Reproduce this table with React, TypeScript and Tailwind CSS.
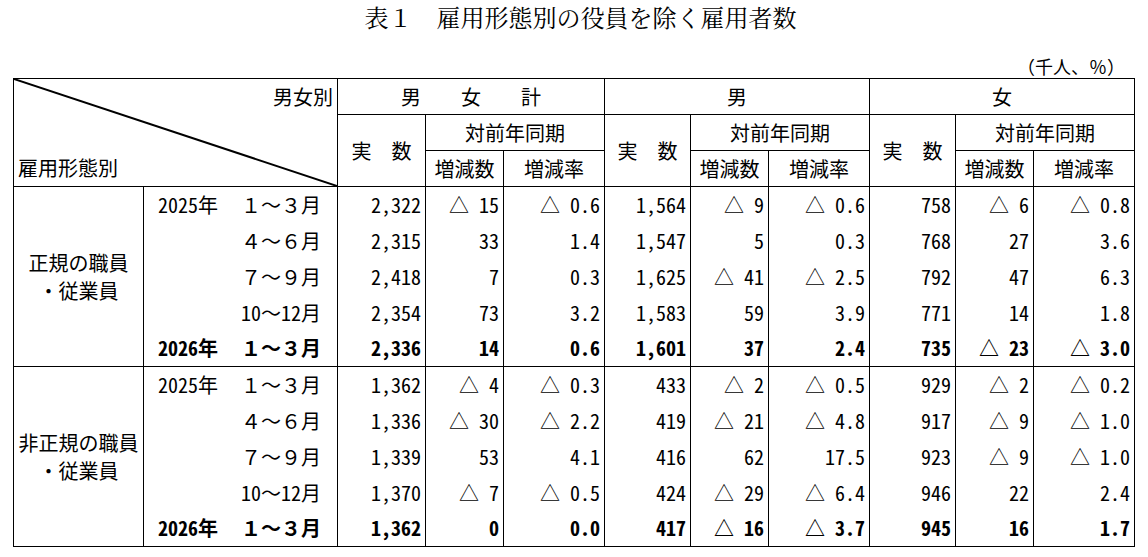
import React from 'react';

type Row = {
  year?: string;
  month: string;
  bold?: boolean;
  values: string[];
};

type Group = {
  label: string[];
  rows: Row[];
};

const GROUPS: Group[] = [
  {
    label: ['正規の職員', '・従業員'],
    rows: [
      { year: '2025年', month: '１～３月', values: ['2,322', '△ 15', '△ 0.6', '1,564', '△ 9', '△ 0.6', '758', '△ 6', '△ 0.8'] },
      { month: '４～６月', values: ['2,315', '33', '1.4', '1,547', '5', '0.3', '768', '27', '3.6'] },
      { month: '７～９月', values: ['2,418', '7', '0.3', '1,625', '△ 41', '△ 2.5', '792', '47', '6.3'] },
      { month: '10～12月', values: ['2,354', '73', '3.2', '1,583', '59', '3.9', '771', '14', '1.8'] },
      { year: '2026年', month: '１～３月', bold: true, values: ['2,336', '14', '0.6', '1,601', '37', '2.4', '735', '△ 23', '△ 3.0'] },
    ],
  },
  {
    label: ['非正規の職員', '・従業員'],
    rows: [
      { year: '2025年', month: '１～３月', values: ['1,362', '△ 4', '△ 0.3', '433', '△ 2', '△ 0.5', '929', '△ 2', '△ 0.2'] },
      { month: '４～６月', values: ['1,336', '△ 30', '△ 2.2', '419', '△ 21', '△ 4.8', '917', '△ 9', '△ 1.0'] },
      { month: '７～９月', values: ['1,339', '53', '4.1', '416', '62', '17.5', '923', '△ 9', '△ 1.0'] },
      { month: '10～12月', values: ['1,370', '△ 7', '△ 0.5', '424', '△ 29', '△ 6.4', '946', '22', '2.4'] },
      { year: '2026年', month: '１～３月', bold: true, values: ['1,362', '0', '0.0', '417', '△ 16', '△ 3.7', '945', '16', '1.7'] },
    ],
  },
];

const SEXES = ['男　　女　　計', '男', '女'];

const cell = 'border border-black p-0 font-normal';
// half-width latin digits, like MS Gothic
const hw = "[font-feature-settings:'hwid']";

// splits "10～12月" so only the ascii digits get half-width forms
function Month({ text }: { text: string }) {
  const m = text.match(/^(\d+)(～)(\d+)(月)$/);
  if (!m) return <span>{text}</span>;
  return (
    <span>
      <span className={hw}>{m[1]}</span>
      {m[2]}
      <span className={hw}>{m[3]}</span>
      {m[4]}
    </span>
  );
}

export default function App() {
  return (
    <div className="min-h-[557px] bg-white text-black pl-[13px] [font-family:'Noto_Sans_CJK_JP',sans-serif]">
      <div className="pt-[2px] h-[32px] text-center text-[24px] leading-[30px] [font-family:'Noto_Serif_CJK_JP','Noto_Sans_CJK_JP',serif]">
        表１　雇用形態別の役員を除く雇用者数
      </div>
      <div className="w-[1122px] mt-[24px] h-[22px] pr-[10px] text-right text-[18px] leading-[20px]">
        （千人、％）
      </div>
      <table className="table-fixed border-collapse w-[1122px] text-[20px] leading-[24px]">
        <colgroup>
          <col className="w-[130px]" />
          <col className="w-[194px]" />
          <col className="w-[88px]" />
          <col className="w-[78px]" />
          <col className="w-[101px]" />
          <col className="w-[86px]" />
          <col className="w-[78px]" />
          <col className="w-[101px]" />
          <col className="w-[86px]" />
          <col className="w-[78px]" />
          <col className="w-[101px]" />
        </colgroup>
        <thead>
          <tr className="h-[36px]">
            <th rowSpan={3} colSpan={2} className={`${cell} relative`}>
              <svg className="absolute inset-0 w-full h-full" preserveAspectRatio="none" viewBox="0 0 100 100">
                <line x1="0" y1="0" x2="100" y2="100" stroke="black" strokeWidth="2" vectorEffect="non-scaling-stroke" />
              </svg>
              <div className="grid grid-rows-[35px_36px_35px]">
                <div className="flex items-center justify-end pr-[4px]">男女別</div>
                <div />
                <div className="flex items-center justify-start pl-[4px]">雇用形態別</div>
              </div>
            </th>
            {SEXES.map((s) => (
              <th key={s} colSpan={3} className={`${cell} text-center`}>
                {s}
              </th>
            ))}
          </tr>
          <tr className="h-[36px]">
            {SEXES.map((s) => (
              <React.Fragment key={s}>
                <th rowSpan={2} className={`${cell} text-center`}>実　数</th>
                <th colSpan={2} className={`${cell} text-center`}>対前年同期</th>
              </React.Fragment>
            ))}
          </tr>
          <tr className="h-[36px]">
            {SEXES.map((s) => (
              <React.Fragment key={s}>
                <th className={`${cell} text-center`}>増減数</th>
                <th className={`${cell} text-center`}>増減率</th>
              </React.Fragment>
            ))}
          </tr>
        </thead>
        <tbody>
          {GROUPS.map((g) =>
            g.rows.map((r, i) => {
              const edge = i === 0 ? 'border-t' : '';
              return (
                <tr key={g.label[0] + i} className={`h-[36px] ${r.bold ? 'font-bold' : ''}`}>
                  {i === 0 && (
                    <td rowSpan={5} className="border border-black p-0 text-center font-normal leading-[28px]">
                      {g.label.map((l) => (
                        <div key={l}>{l}</div>
                      ))}
                    </td>
                  )}
                  <td className={`border-x ${edge} border-black p-0`}>
                    <div className="flex items-center justify-between pl-[14px] pr-[16px]">
                      <span className={hw}>{r.year ?? ''}</span>
                      <Month text={r.month} />
                    </div>
                  </td>
                  {r.values.map((v, j) => (
                    <td key={j} className={`border-x ${edge} border-black p-0 pr-[4px] text-right whitespace-pre ${hw}`}>
                      {v}
                    </td>
                  ))}
                </tr>
              );
            })
          )}
          <tr className="h-0">
            <td colSpan={11} className="border-t border-black p-0" />
          </tr>
        </tbody>
      </table>
    </div>
  );
}
